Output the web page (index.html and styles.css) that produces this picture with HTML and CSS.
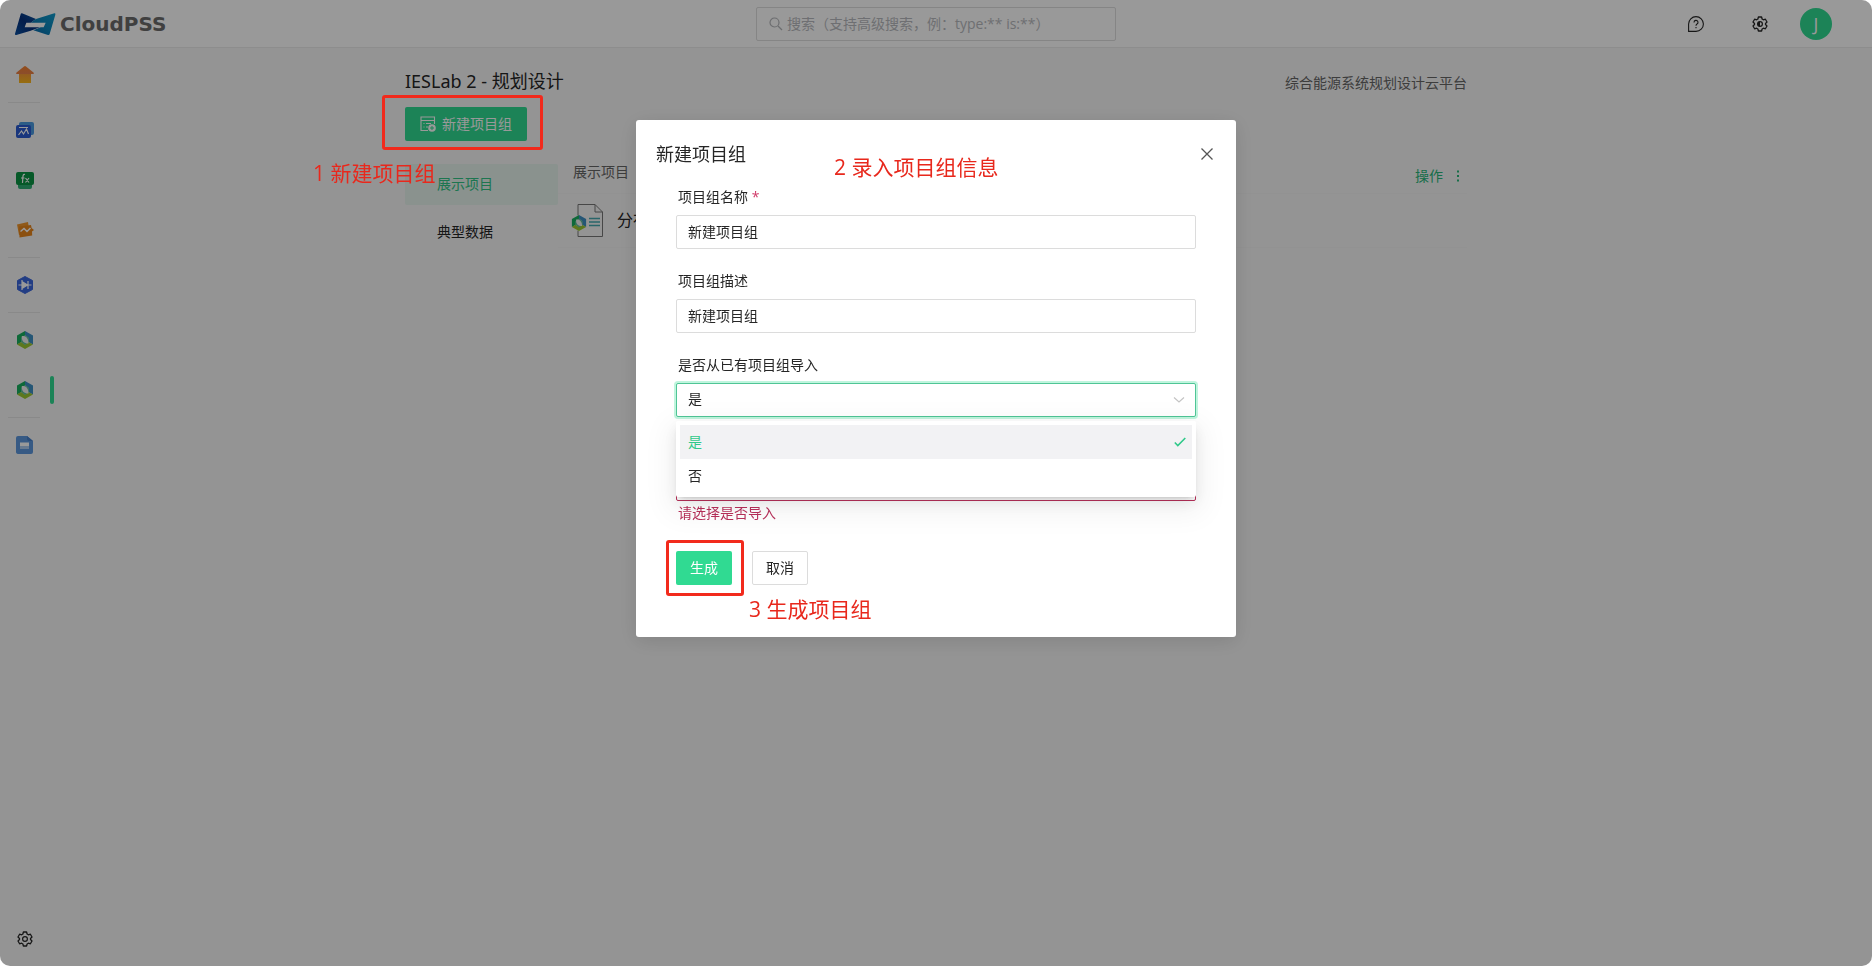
FILE: index.html
```html
<!DOCTYPE html>
<html lang="zh-CN">
<head>
<meta charset="utf-8">
<title>IESLab 2 - 规划设计</title>
<link rel="stylesheet" href="styles.css">
</head>
<body>
<svg class="defs" width="0" height="0" aria-hidden="true">
  <defs>
    <linearGradient id="navy" x1="0" y1="1" x2="1" y2="0"><stop offset="0" stop-color="#0a4fa0"/><stop offset=".5" stop-color="#06307c"/><stop offset="1" stop-color="#0c5da8"/></linearGradient>
    <linearGradient id="cyan" x1="0" y1="1" x2="1" y2="0"><stop offset="0" stop-color="#0a62a8"/><stop offset=".5" stop-color="#0c86bb"/><stop offset="1" stop-color="#109acb"/></linearGradient>
    <linearGradient id="roof" x1="0" y1="0" x2="0" y2="1"><stop offset="0" stop-color="#f5822e"/><stop offset="1" stop-color="#e8804a"/></linearGradient>
    <linearGradient id="wall" x1="0" y1="0" x2="0" y2="1"><stop offset="0" stop-color="#f5953a"/><stop offset="1" stop-color="#fbb81c"/></linearGradient>
    <symbol id="gear" viewBox="0 0 16 16">
      <path d="M6.4 1h3.2l.5 2 1.3.8 2-.6 1.6 2.8-1.500 1.400v1.200L15 10l-1.600 2.800-2-.6-1.300.8-.5 2H6.400l-.5-2-1.300-.8-2 .6L1 10l1.500-1.400V7.400L1 6l1.600-2.800 2 .6L5.900 3z" fill="none" stroke="currentColor" stroke-width="1.300" stroke-linejoin="round"/>
      <circle cx="8" cy="8" r="2.400" fill="none" stroke="currentColor" stroke-width="1.200"/>
    </symbol>
    <symbol id="ies" viewBox="0 0 18 18">
      <path d="M9 0 1 4.500v9L5.500 11V7L10 4z" fill="#18b060"/>
      <path d="M9 0l8 4.500v9L12.500 11V7L9 4z" fill="#3f8fc4"/>
      <path d="M1 13.500 9 18l8-4.500L12.500 11 9 13.500 5 11z" fill="#9cc832"/>
      <path d="m9 4 4 3v4l-4 3-4-3V7z" fill="#63bd9c"/>
      <path d="M5.800 5c4-.5 6.700 2 6.700 7.500C8 12.500 5.300 10 5.800 5z" fill="#f2f2f2"/>
    </symbol>
  </defs>
</svg>

<div class="app">
  <header class="topbar">
    <a class="brand" href="#">
      <svg width="42" height="24" viewBox="0 0 126 72" aria-hidden="true">
        <path d="M24 4 66 21 50 32H37l-5 14h46L50 56 7 69q-5 1-4-4L20 7q1-4 4-3z" fill="url(#navy)"/>
        <path d="M121 4q4-1 3 4l-17 58q-1 4-5 3L58 55l22-9h9l6-14H50l16-11z" fill="url(#cyan)"/>
      </svg>
      <span>CloudPSS</span>
    </a>
    <label class="search">
      <svg width="14" height="14" viewBox="0 0 14 14" aria-hidden="true"><circle cx="5.500" cy="5.500" r="4.500"/><path d="m9 9 4 4"/></svg>
      <input type="search" aria-label="搜索" placeholder="搜索（支持高级搜索，例：type:** is:**）">
    </label>
    <div class="tools">
      <button type="button" aria-label="帮助">
        <svg width="16" height="16" viewBox="0 0 16 16" aria-hidden="true"><path d="M.6 15.400V8A7.400 7.400 0 1 1 8 15.400zM6 6.400a2 2 0 1 1 3 1.700c-.7.400-1 .8-1 1.600M8 11v1.200" fill="none" stroke="currentColor" stroke-width="1.100"/></svg>
      </button>
      <button type="button" aria-label="设置">
        <svg width="16" height="16" aria-hidden="true"><use href="#gear"/><path d="M8 5.600a2.400 2.400 0 0 0 0 4.800z" fill="currentColor"/></svg>
      </button>
      <button type="button" class="avatar">J</button>
    </div>
  </header>

  <div class="body">
    <nav class="rail" aria-label="应用">
      <a href="#" aria-label="主页"><svg width="18" height="18" viewBox="0 0 18 18"><path d="M3 7h12v9.500q0 .5-.5.500h-11q-.5 0-.5-.5z" fill="url(#wall)"/><path d="M9 0q.6 0 1 .4l7.500 6.200q1 1.400-.8 1.400H1.300q-1.800 0-.8-1.400L8 .4Q8.400 0 9 0z" fill="url(#roof)"/></svg></a>
      <hr>
      <a href="#" aria-label="仿真"><svg width="18" height="18" viewBox="0 0 18 18"><rect x="3" y="1" width="15" height="13" rx="2" fill="#4a9ae0"/><rect y="4" width="15" height="13" rx="2" fill="#2a5bd0"/><path d="M3 6.500h9M2.500 14l3-4 2 3 3-5 2 5" fill="none" stroke="#fff" stroke-width="1.200"/></svg></a>
      <a href="#" aria-label="函数"><svg width="18" height="18" viewBox="0 0 18 18"><rect x="2" y="6" width="14" height="12" rx="2" fill="#2fae74"/><rect y="1" width="18" height="13" rx="2" fill="#0b9444"/><path d="M9 3.500c-2.500-.8-2 2-2.500 8.500M5 7h3.500M9.500 7l3.500 4.500M13 7l-3.500 4.500" fill="none" stroke="#fff" stroke-width="1.200"/></svg></a>
      <a href="#" aria-label="应用"><svg width="18" height="18" viewBox="0 0 18 18"><path d="M1 3.500 12 1l1.500 10L3 14z" fill="#f0952a"/><path d="M3 5.500 15 4l.6 3 2.400 2-2 1.500.2 4L3.500 16.500z" fill="#e8861c"/><path d="m4.500 10.500 3.500-3 3 3 3.500-3.500" fill="none" stroke="#fff" stroke-width="1.500"/></svg></a>
      <hr>
      <a href="#" aria-label="电路"><svg width="18" height="18" viewBox="0 0 18 18"><path d="m9 .5 7.500 4v9L9 17.500l-7.500-4v-9z" fill="#3a66dc" stroke="#3a66dc" stroke-linejoin="round"/><path d="M2.500 9h13M6 5.500v7L11.500 9zM12 5v8M6 4v10" fill="#fff" stroke="#fff" stroke-width="1.200"/></svg></a>
      <hr>
      <a href="#" aria-label="IESLab 1"><svg width="18" height="18"><use href="#ies"/></svg></a>
      <a class="current" href="#" aria-label="IESLab 2"><svg width="18" height="18"><use href="#ies"/></svg></a>
      <hr>
      <a href="#" aria-label="文档"><svg width="18" height="18" viewBox="0 0 18 18"><path d="M2 0h9l6 5v11q0 2-2 2H3q-3 0-3-2V2q0-2 2-2z" fill="#5c97dc"/><path d="m11 0 6 5h-4q-2 0-2-2z" fill="#4680cc"/><path d="M4 6.500h9v4H4zM4 11.500h9v1H4z" fill="#fff"/></svg></a>
      <a class="last" href="#" aria-label="系统设置"><svg width="16" height="16"><use href="#gear"/></svg></a>
    </nav>

    <main class="content">
      <div class="heading"><h1>IESLab 2 - 规划设计</h1><p>综合能源系统规划设计云平台</p></div>
      <button type="button" class="primary create">
        <svg width="16" height="16" viewBox="0 0 16 16" aria-hidden="true"><path d="M8 14.500H1V1h13.500v7M1 4.500h13.500M3.500 7.500h1M6 7.500h5M3.500 11h1M6 11h2" fill="none" stroke="currentColor" stroke-width="1.100"/><circle cx="12" cy="12" r="3.800" fill="#fff"/><path d="M12 10v4M10 12h4" stroke="#30da92"/></svg>
        新建项目组
      </button>
      <div class="split">
        <nav class="tabs" aria-label="分类">
          <a class="on" href="#">展示项目</a>
          <a href="#">典型数据</a>
        </nav>
        <table>
          <thead><tr><th>展示项目</th><th class="ops"><button type="button">操作<svg width="4" height="14" viewBox="0 0 4 14" aria-hidden="true"><path d="M1 1.500h2v2H1zM1 6h2v2H1zM1 10.500h2v2H1z" fill="currentColor"/></svg></button></th></tr></thead>
          <tbody><tr><td colspan="2"><a class="project" href="#"><svg width="32" height="33" viewBox="0 0 32 33" aria-hidden="true"><path d="M7 .5h17l7.500 7.500v24.500H7zM24 .5V8h7.500" fill="none" stroke="#777"/><path d="M18 14.500h11M18 18h11M18 21.500h11" stroke="#45a9b0" stroke-width="1.300"/><circle cx="9" cy="19" r="8" fill="#f7f7f7"/><svg y="10" width="16" height="18"><use href="#ies" width="16" height="18"/></svg></svg>分布式能源系统</a></td></tr></tbody>
        </table>
      </div>
    </main>
  </div>

  <div class="mask">
    <section class="dialog" role="dialog" aria-labelledby="dlg-title">
      <header><h2 id="dlg-title">新建项目组</h2>
        <button type="button" class="close" aria-label="关闭"><svg width="12" height="12" viewBox="0 0 12 12"><path d="m.5.500 11 11M11.500.500l-11 11" stroke="currentColor" stroke-width="1.300"/></svg></button>
      </header>
      <form>
        <div class="field"><label for="name">项目组名称 <b>*</b></label><input id="name" type="text" value="新建项目组"></div>
        <div class="field"><label for="desc">项目组描述</label><input id="desc" type="text" value="新建项目组"></div>
        <div class="field picker"><label for="import">是否从已有项目组导入</label>
          <div class="select open"><select id="import"><option>是</option><option>否</option></select>
            <svg width="12" height="8" viewBox="0 0 12 8" aria-hidden="true"><path d="m1 1.500 5 4.500 5-4.500" fill="none" stroke="#c4c4c4" stroke-width="1.200"/></svg>
          </div>
          <ul class="menu" role="listbox" aria-label="是否从已有项目组导入">
            <li class="chosen" role="option" aria-selected="true">是<svg width="12" height="10" viewBox="0 0 12 10" aria-hidden="true"><path d="m.8 5.500 3 3 7.500-7.500" fill="none" stroke="currentColor" stroke-width="1.600"/></svg></li>
            <li role="option" aria-selected="false">否</li>
          </ul>
        </div>
        <div class="field source"><div class="select invalid"><select aria-label="选择项目组"></select></div><p>请选择是否导入</p></div>
        <div class="actions"><button type="submit" class="primary">生成</button><button type="button" class="plain">取消</button></div>
      </form>
      <span class="note note-form">2 录入项目组信息</span>
      <span class="frame frame-submit"></span>
      <span class="note note-submit">3 生成项目组</span>
    </section>
    <div class="guide">
      <span class="frame frame-create"></span>
      <span class="note note-create">1 新建项目组</span>
    </div>
  </div>
</div>
</body>
</html>
```
FILE: styles.css
```css
* { box-sizing: border-box; }
body {
  margin: 0;
  background: #fff;
  color: #262626;
  font: 14px/24px "Open Sans", "Noto Sans CJK SC", sans-serif;
}
button, input, select { font: inherit; color: inherit; margin: 0; }
button { padding: 0; border: 0; background: none; cursor: pointer; }
a { color: inherit; text-decoration: none; }
h1, h2, p, ul { margin: 0; padding: 0; font-weight: 400; }
svg { display: block; flex: none; }
.defs { position: absolute; }

.app {
  display: flex;
  flex-direction: column;
  min-height: 100vh;
  border-radius: 10px;
  overflow: hidden;
  background: #f7f7f7;
}

/* Top bar */
.topbar {
  display: grid;
  grid-template-columns: 1fr 360px 1fr;
  align-items: center;
  height: 48px;
  padding: 0 14px;
  background: #fff;
  border-bottom: 1px solid #ececec;
}
.brand { display: flex; align-items: center; gap: 4px; color: #6c6c6c; font: 700 20px/24px "DejaVu Sans", sans-serif; }
.search {
  display: flex;
  align-items: center;
  gap: 4px;
  height: 34px;
  padding: 0 12px;
  border: 1px solid #dedede;
  border-radius: 2px;
}
.search svg { fill: none; stroke: #b4b6ba; stroke-width: 1.2; }
.search input { flex: 1; min-width: 0; padding: 0; border: 0; outline: 0; background: none; }
.search input::placeholder { color: #b8babe; }
.tools { display: flex; justify-content: flex-end; align-items: center; gap: 48px; padding-right: 26px; }
.avatar { width: 32px; height: 32px; margin-left: -16px; border-radius: 50%; background: #30da92; color: #fff; font-size: 18px; }

/* Side rail and content */
.body { flex: 1; display: grid; grid-template-columns: 54px 1fr 54px; }
.rail { display: flex; flex-direction: column; padding: 2px 0; }
.rail a { position: relative; display: grid; place-items: center; width: 50px; height: 50px; }
.rail hr { width: 32px; height: 1px; margin: 2px 8px; border: 0; background: #e4e4e4; }
.rail .current::after { content: ""; position: absolute; left: 50px; top: 11px; width: 4px; height: 28px; border-radius: 2px; background: #30da92; }
.rail .last { margin-top: auto; }
.content { width: 100%; max-width: 1062px; margin: 0 auto; padding-top: 19px; }
.heading { display: flex; justify-content: space-between; align-items: center; }
.heading h1 { font-family: "Noto Sans", "Noto Sans CJK SC", sans-serif; font-size: 18px; line-height: 28px; }
.heading p { padding-top: 4px; color: #666; }
.primary { height: 34px; border-radius: 2px; background: #30da92; color: #fff; }
.create { display: flex; align-items: center; justify-content: center; gap: 6px; width: 122px; margin-top: 12px; }
.split { display: grid; grid-template-columns: 153px 1fr; margin-top: 10px; }
.tabs { display: flex; flex-direction: column; gap: 7px; padding-top: 13px; }
.tabs a { padding: 8px 32px 9px; border-radius: 2px; }
.tabs .on { background: #e6f3ed; color: #30c586; }
table { width: 100%; border-collapse: collapse; align-self: start; }
th { height: 42px; padding: 0 15px; font-weight: 400; text-align: left; color: #666; border-bottom: 1px solid #f3f3f3; }
td { height: 54px; padding: 0 13px; border-bottom: 1px solid #f3f3f3; }
.ops { padding-right: 7px; padding-top: 8px; color: #28b87b; }
.ops button { display: flex; align-items: center; gap: 13px; margin-left: auto; }
.project { display: flex; align-items: center; gap: 14px; font-size: 16px; }

/* Dialog */
.mask { position: fixed; inset: 0; border-radius: 10px; background: rgba(0, 0, 0, .4); }
.dialog {
  position: relative;
  width: 600px;
  margin: 120px auto 0;
  padding-bottom: 52px;
  border-radius: 3px;
  background: #fff;
  box-shadow: 0 4px 20px rgba(0, 0, 0, .12);
}
.dialog header { display: flex; justify-content: space-between; align-items: center; height: 65px; padding: 2px 20px 0; }
.dialog h2 { font-size: 18px; line-height: 28px; }
.close { padding: 3px; color: #555; }
form { padding: 0 40px; }
.field { display: flex; flex-direction: column; gap: 6px; margin-bottom: 20px; }
.field label { padding-left: 2px; }
.field b { color: #d03a68; font-weight: 400; }
.field input, .select select {
  width: 100%;
  height: 34px;
  padding: 0 11px 2px;
  border: 1px solid #dcdcdc;
  border-radius: 2px;
  background: #fff;
  outline: 0;
  appearance: none;
}
.select { display: grid; align-items: center; }
.select > * { grid-area: 1 / 1; }
.select > svg { justify-self: end; margin-right: 11px; }
.open select { border-color: #4fc596; box-shadow: 0 0 0 2px #c0f5de; }
.invalid select { border-color: #b8305a; }
.picker { position: relative; }
.menu {
  position: absolute;
  top: 68px;
  left: 0;
  right: 0;
  z-index: 1;
  padding: 4px;
  border-radius: 2px;
  background: #fff;
  list-style: none;
  box-shadow: 0 3px 6px -4px rgba(0, 0, 0, .3), 0 6px 16px rgba(0, 0, 0, .08), 0 9px 28px 8px rgba(0, 0, 0, .05);
}
.menu li { display: flex; align-items: center; justify-content: space-between; height: 34px; padding: 0 6px 0 8px; }
.menu .chosen { background: #f2f2f4; color: #30c98a; }
.source { gap: 0; margin: 50px 0 26px; }
.source p { padding-left: 2px; color: #b8305a; }
.actions { display: flex; gap: 20px; }
.actions button { width: 56px; }
.plain { height: 34px; border: 1px solid #dcdcdc; border-radius: 2px; }

/* Annotations drawn over the screen */
.guide { position: absolute; top: 0; left: 50%; }
.frame { position: absolute; border: 3px solid #f22a1c; border-radius: 3px; }
.note { position: absolute; color: #e8281c; font-size: 21px; line-height: 28px; white-space: nowrap; }
.frame-create { left: -554px; top: 95px; width: 161px; height: 55px; }
.note-create { left: -623px; top: 159px; }
.note-form { left: 198px; top: 33px; }
.frame-submit { left: 30px; top: 420px; width: 78px; height: 56px; }
.note-submit { left: 113px; top: 475px; }
```
